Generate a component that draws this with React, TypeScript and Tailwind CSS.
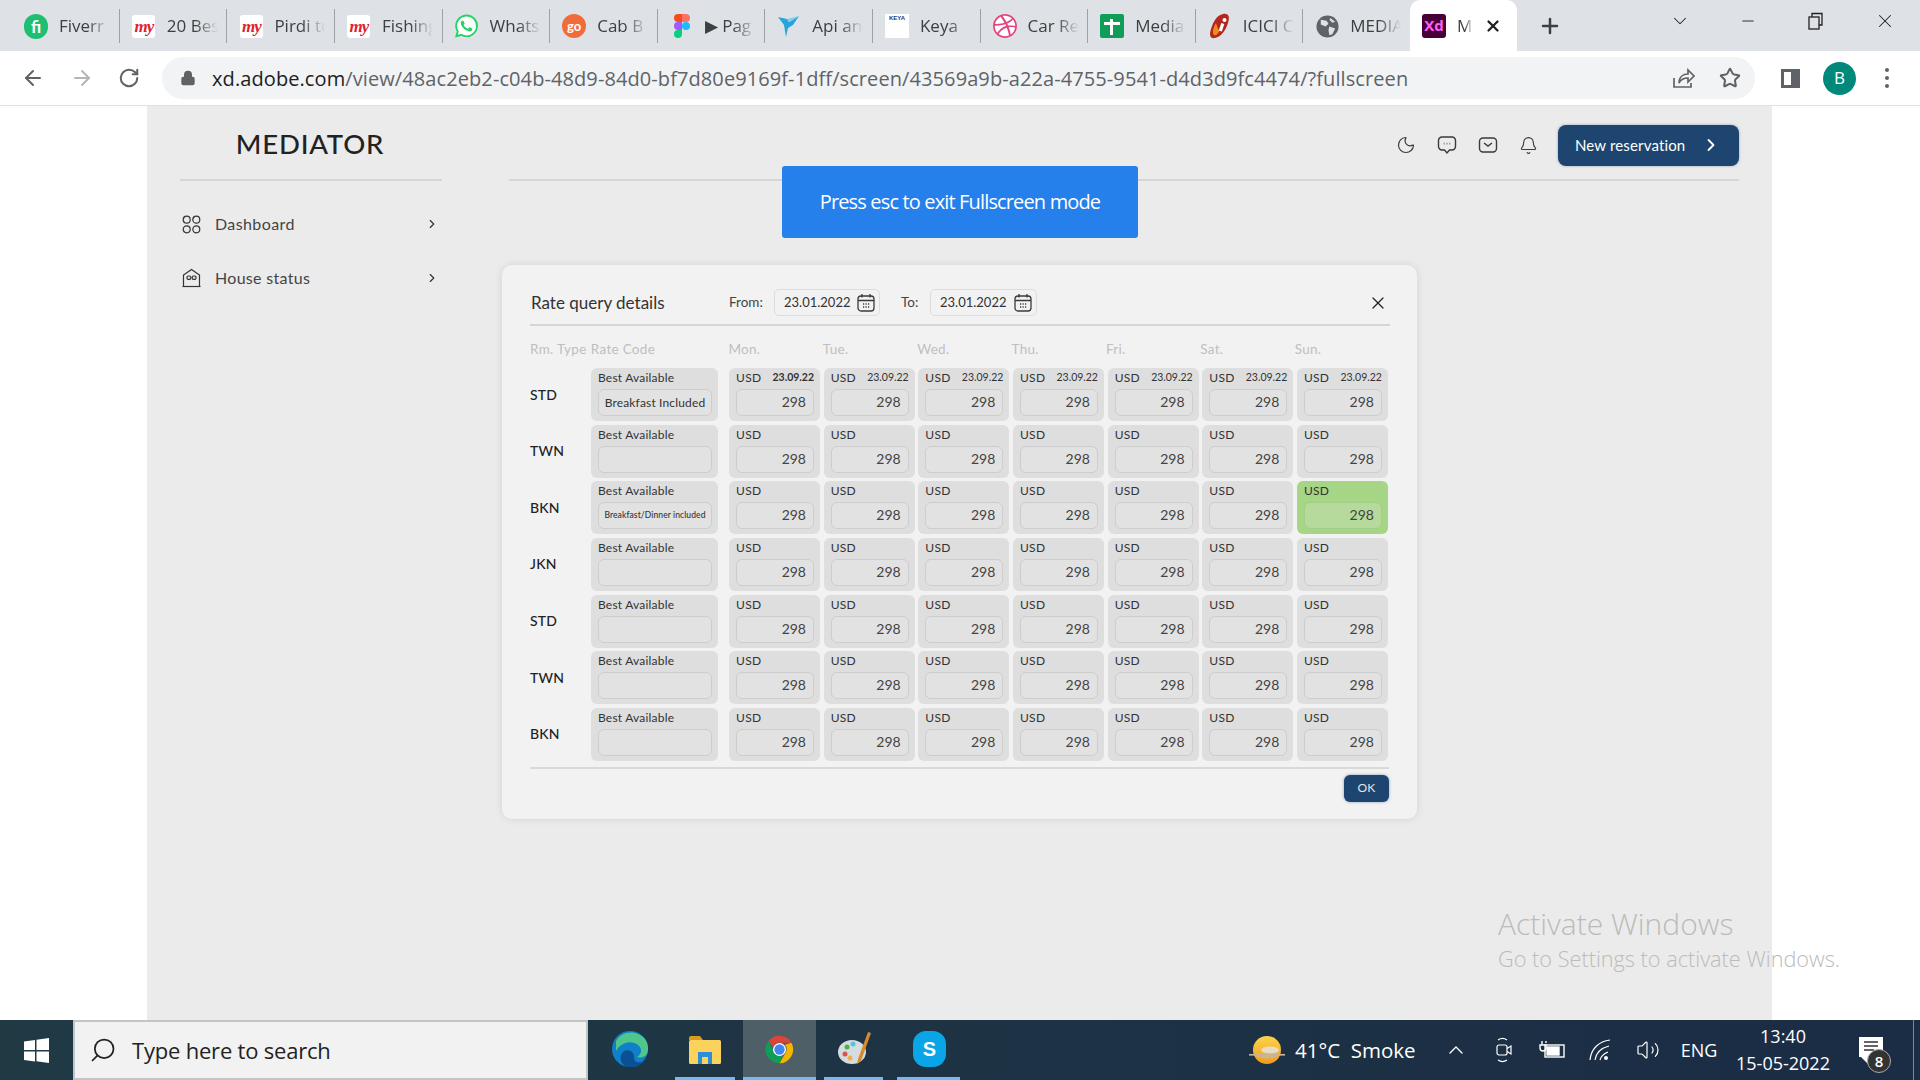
import React from "react";
import { ArrowLeft, ArrowRight, RotateCw, Lock, Star, X, Plus, ChevronDown, Minus, ChevronRight, ChevronUp, Moon, Bell, Search, Volume2 } from "lucide-react";
import { SiWhatsapp, SiDribbble } from "react-icons/si";

const My = () => (
  <div className="w-[23px] h-[23px] bg-white rounded-[3px] flex items-center justify-center text-[#e0222d] italic font-bold text-[17px] leading-none tracking-[-1px] font-['Liberation_Serif',serif]">my</div>
);
const Figma = () => (
  <svg width="16" height="24" viewBox="0 0 16 24">
    <path d="M0 4a4 4 0 0 1 4-4h4v8H4a4 4 0 0 1-4-4z" fill="#f24e1e" />
    <path d="M8 0h4a4 4 0 0 1 0 8H8z" fill="#ff7262" />
    <path d="M0 12a4 4 0 0 1 4-4h4v8H4a4 4 0 0 1-4-4z" fill="#a259ff" />
    <circle cx="12" cy="12" r="4" fill="#1abcfe" />
    <path d="M0 20a4 4 0 0 1 4-4h4v4a4 4 0 0 1-8 0z" fill="#0acf83" />
  </svg>
);
const Bird = () => (
  <svg width="24" height="24" viewBox="0 0 24 24">
    <path d="M1 3l9 2 2 3 10-6-6 9-5 3-2 9-2-12z" fill="#27a4dc" />
    <path d="M10 5l2 3 10-6z" fill="#7fd0ee" />
  </svg>
);
const Icici = () => (
  <svg width="22" height="26" viewBox="0 0 22 26">
    <path d="M14 1c6-1 7 3 5 9-2 7-7 14-13 15-5 1-6-3-4-9 2-7 6-14 12-15z" fill="#b3271e" />
    <path d="M7 10c-3 5-4 10-2 12 2 1 4-1 6-5l-2-1z" fill="#f08a1d" />
    <rect x="11" y="10" width="3.2" height="8" fill="#fff" transform="rotate(18 12 14)" />
    <circle cx="15.5" cy="7" r="2" fill="#fff" />
  </svg>
);
const Globe = () => (
  <svg width="23" height="23" viewBox="0 0 24 24">
    <circle cx="12" cy="12" r="11.5" fill="#5f6368" />
    <path d="M5 5l6 1 2 3-3 3-5-2zM14 12l6 2-3 6-3 1-1-5zM15 3l5 4-3 1-3-3z" fill="#dee1e6" />
  </svg>
);

const tabs: { icon: React.ReactNode; label: string }[] = [
  { icon: <div className="w-[25px] h-[25px] rounded-full bg-[#1dbf73] flex items-center justify-center text-white text-[17px] font-bold leading-none font-['Lato',sans-serif]">fi</div>, label: "Fiverr" },
  { icon: <My />, label: "20 Best" },
  { icon: <My />, label: "Pirdi to" },
  { icon: <My />, label: "Fishing" },
  { icon: <div className="w-[23px] h-[23px] rounded-full bg-white flex items-center justify-center"><SiWhatsapp className="text-[#25d366] w-[24px] h-[24px]" /></div>, label: "Whats" },
  { icon: <div className="w-[24px] h-[24px] rounded-full bg-[#f26b3a] flex items-center justify-center text-white text-[13px] font-bold leading-none font-['Lato',sans-serif]">go</div>, label: "Cab B" },
  { icon: <Figma />, label: "▶ Pag" },
  { icon: <Bird />, label: "Api an" },
  { icon: <div className="w-[24px] h-[24px] bg-white flex items-start justify-center text-[6px] leading-[8px] font-bold text-[#243a73] font-['Liberation_Sans',sans-serif]">KEYA</div>, label: "Keya" },
  { icon: <div className="w-[24px] h-[24px] rounded-full bg-white flex items-center justify-center"><SiDribbble className="text-[#e4447f] w-[24px] h-[24px]" /></div>, label: "Car Re" },
  { icon: <div className="relative w-[24px] h-[24px] bg-[#0f9d58] rounded-[2px]"><span className="absolute left-[10px] top-[5px] w-[3px] h-[16px] bg-white" /><span className="absolute left-[4px] top-[8px] w-[16px] h-[3px] bg-white" /></div>, label: "Media" },
  { icon: <Icici />, label: "ICICI C" },
  { icon: <Globe />, label: "MEDIA" },
];

function Tab({ icon, label, first }: { icon: React.ReactNode; label: string; first: boolean }) {
  return (
    <div className={`h-[34px] mt-[9px] border-r border-[#9ea1a6] flex items-center pl-[12px] shrink-0 ${first ? "w-[107.8px]" : "w-[107.6px]"}`}>
      <div className="w-[24px] flex justify-center shrink-0">{icon}</div>
      <span className="ml-[11px] w-[51px] overflow-hidden whitespace-nowrap text-[17px] text-[#3c4043] [mask-image:linear-gradient(to_right,black_55%,transparent)]">{label}</span>
    </div>
  );
}

function TabBar() {
  return (
    <div className="h-[51px] bg-[#dee1e6] flex items-start pl-[12px] shrink-0">
      {tabs.map((t, i) => (
        <Tab key={t.label} icon={t.icon} label={t.label} first={i === 0} />
      ))}
      <div className="w-[107px] h-[51px] bg-white rounded-t-[10px] flex items-center pl-[12px] shrink-0 -ml-px">
        <div className="w-[24px] h-[24px] rounded-[3px] bg-[#470137] flex items-center justify-center text-[#ff61f6] text-[15px] font-bold leading-none font-['Open_Sans',sans-serif]">Xd</div>
        <span className="ml-[11px] w-[16px] overflow-hidden text-[17px] text-[#3c4043] [mask-image:linear-gradient(to_right,black_50%,transparent)]">M</span>
        <X className="ml-[11px] w-[18px] h-[18px] text-[#202124]" strokeWidth={3} />
      </div>
      <div className="w-[46px] h-[51px] flex items-center justify-center ml-[10px]">
        <Plus className="w-[24px] h-[24px] text-[#3c4043]" strokeWidth={2.5} />
      </div>
      <div className="ml-auto flex h-[42px] items-center text-[#202124]">
        <ChevronDown className="w-[22px] h-[22px] mr-[48px]" strokeWidth={1.1} />
        <Minus className="w-[18px] h-[18px] mr-[50px]" strokeWidth={1.2} />
        <svg width="18" height="18" viewBox="0 0 18 18" fill="none" stroke="#202124" strokeWidth="1.3" className="mr-[49px]">
          <rect x="2" y="5" width="10" height="12" />
          <path d="M5 5V1.5h10V13h-3" />
        </svg>
        <X className="w-[22px] h-[22px] mr-[24px]" strokeWidth={1.1} />
      </div>
    </div>
  );
}

function Toolbar() {
  return (
    <div className="h-[55px] bg-white flex items-center shrink-0 border-b border-[#dfe1e4]">
      <ArrowLeft className="ml-[21px] w-[24px] h-[24px] text-[#5f6368]" strokeWidth={2} />
      <ArrowRight className="ml-[25px] w-[24px] h-[24px] text-[#b4b6b9]" strokeWidth={2} />
      <RotateCw className="ml-[24px] w-[22px] h-[22px] text-[#5f6368]" strokeWidth={2.2} />
      <div className="ml-[22px] w-[1593px] h-[42px] rounded-full bg-[#f1f3f4] flex items-center">
        <Lock className="ml-[18px] w-[16px] h-[16px] text-[#5f6368] fill-[#5f6368]" />
        <span className="ml-[16px] pt-[1px] text-[20px] tracking-[0.09px] whitespace-nowrap text-[#5f6368]">
          <span className="text-[#202124]">xd.adobe.com</span>/view/48ac2eb2-c04b-48d9-84d0-bf7d80e9169f-1dff/screen/43569a9b-a22a-4755-9541-d4d3d9fc4474/?fullscreen
        </span>
        <div className="ml-auto flex items-center text-[#5f6368]">
          <svg width="24" height="24" viewBox="0 0 24 24" fill="none" stroke="#5f6368" strokeWidth="1.7">
            <path d="M3 12v9h17v-4" />
            <path d="M8 17c0-6 4-9 9-9V4l6 6-6 6v-4c-4 0-7 1-9 5z" />
          </svg>
          <Star className="ml-[24px] mr-[14px] w-[22px] h-[22px]" strokeWidth={2.2} />
        </div>
      </div>
      <div className="ml-[26px] w-[19px] h-[19px] border-[3px] border-[#5f6368] flex justify-end">
        <div className="w-[6px] bg-[#5f6368]" />
      </div>
      <div className="ml-[23px] w-[33px] h-[33px] rounded-full bg-[#00897b] flex items-center justify-center text-white text-[17px]">B</div>
      <div className="ml-[29px] flex flex-col gap-[4px]">
        <span className="w-[4px] h-[4px] rounded-full bg-[#5f6368]" />
        <span className="w-[4px] h-[4px] rounded-full bg-[#5f6368]" />
        <span className="w-[4px] h-[4px] rounded-full bg-[#5f6368]" />
      </div>
    </div>
  );
}

const GridIcon = () => (
  <svg width="19" height="19" viewBox="0 0 19 19" fill="none" stroke="#333" strokeWidth="1.2">
    <circle cx="4.7" cy="4.7" r="3.5" />
    <circle cx="14.3" cy="4.7" r="3.5" />
    <circle cx="4.7" cy="14.3" r="3.5" />
    <circle cx="14.3" cy="14.3" r="3.5" />
  </svg>
);
const HouseIcon = () => (
  <svg width="19" height="20" viewBox="0 0 19 20" fill="none" stroke="#333" strokeWidth="1.2">
    <path d="M1.5 18.5V7L9.5 1.5l8 5.5v11.5" />
    <path d="M0.5 18.5h18" />
    <rect x="5" y="8" width="3.8" height="3.4" rx="1.3" />
    <rect x="10.2" y="8" width="3.8" height="3.4" rx="1.3" />
  </svg>
);

function Sidebar() {
  return (
    <aside className="w-[328px] shrink-0 bg-[#ebebeb] px-[33px] shadow-[3px_0_6px_rgba(0,0,0,0.015)] relative">
      <div className="h-[75px] border-b-2 border-[#d6d6d6] flex items-center justify-center text-[27.5px] tracking-[0.8px] font-medium text-[#222] pt-[2px] pr-[2px]">MEDIATOR</div>
      <div className="mt-[21px] h-[44px] flex items-center pl-[2px] text-[#444] text-[16px]">
        <GridIcon />
        <span className="ml-[14px] tracking-[0.4px]">Dashboard</span>
        <ChevronRight className="ml-auto mr-[3px] w-[14px] h-[14px] text-[#333]" />
      </div>
      <div className="mt-[10px] h-[44px] flex items-center pl-[2px] text-[#444] text-[16px]">
        <HouseIcon />
        <span className="ml-[14px] tracking-[0.3px]">House status</span>
        <ChevronRight className="ml-auto mr-[3px] w-[14px] h-[14px] text-[#333]" />
      </div>
    </aside>
  );
}

function Calendar() {
  return (
    <svg width="18" height="19" viewBox="0 0 18 19" fill="none" stroke="#3a3a3a" strokeWidth="1.3">
      <rect x="1" y="3" width="16" height="15" rx="3" />
      <path d="M1 7.5h16M5 1v3.5M13 1v3.5" />
      <path d="M6 11h1.2M8.5 11h1.2M11 11h1.2M6 14h1.2M8.5 14h1.2M11 14h1.2" />
    </svg>
  );
}

function DateField({ className }: { className: string }) {
  return (
    <div className={`h-[27px] border border-[#dcdcdc] rounded-[5px] flex items-center justify-between pl-[9px] pr-[4px] text-[13px] text-[#333] ${className}`}>
      <span>23.01.2022</span>
      <Calendar />
    </div>
  );
}

const rows = [
  { type: "STD", note: "Breakfast Included", noteClass: "text-[12px] tracking-[0.15px] text-[#333]", date: true },
  { type: "TWN", note: "", noteClass: "", date: false },
  { type: "BKN", note: "Breakfast/Dinner included", noteClass: "text-[8.5px] tracking-[0.1px] text-[#333] font-medium", date: false },
  { type: "JKN", note: "", noteClass: "", date: false },
  { type: "STD", note: "", noteClass: "", date: false },
  { type: "TWN", note: "", noteClass: "", date: false },
  { type: "BKN", note: "", noteClass: "", date: false },
];
const days = ["Mon.", "Tue.", "Wed.", "Thu.", "Fri.", "Sat.", "Sun."];

function DayCell({ date, green, bold }: { date: boolean; green: boolean; bold: boolean }) {
  return (
    <div className={`w-[91px] h-[53px] rounded-[6px] px-[7px] shrink-0 ${green ? "bg-[#a5d585]" : "bg-[#dedede]"}`}>
      <div className="h-[20px] mb-[1px] flex items-center justify-between text-[12px] text-[#333] tracking-[0.3px]">
        <span>USD</span>
        {date && <span className={`text-[10.5px] -mr-[1px] tracking-[0] ${bold ? "font-bold" : ""}`}>23.09.22</span>}
      </div>
      <div className={`h-[27px] -mr-[1px] rounded-[6px] border flex items-center justify-end pr-[7px] pb-[2px] text-[14px] text-[#444] ${green ? "border-[#a0cf85] bg-[#b6da9c]" : "border-[#cdcdcd] bg-[#e2e2e2]"}`}>298</div>
    </div>
  );
}

function Modal() {
  return (
    <div className="w-[915px] h-[554px] ml-[27px] bg-[#f2f2f2] rounded-[10px] shadow-[0_0_8px_rgba(0,0,0,0.1)] pl-[28px] pr-[28px] pt-[24px]">
      <div className="h-[37px] w-[860px] border-b-2 border-[#d6d6d6] flex items-start">
        <div className="w-[199px] h-[27px] flex items-center pl-[1px] text-[17px] text-[#333]">Rate query details</div>
        <div className="w-[45px] h-[27px] flex items-center text-[13.5px] text-[#444]">From:</div>
        <DateField className="w-[106px]" />
        <div className="w-[29px] ml-[21px] h-[27px] flex items-center text-[13.5px] text-[#444]">To:</div>
        <DateField className="w-[107px]" />
        <X className="ml-auto mr-[2px] mt-[4px] w-[20px] h-[20px] text-[#222]" strokeWidth={1.5} />
      </div>
      <div className="h-[42px] pt-[5px] flex items-center text-[13.5px] text-[#bfbfbf] tracking-[0.3px]">
        <span className="w-[61px] whitespace-nowrap">Rm. Type</span>
        <span className="w-[138px]">Rate Code</span>
        {days.map((d) => (
          <span key={d} className="w-[94.67px]">{d}</span>
        ))}
      </div>
      <div className="flex flex-col gap-[3.67px]">
        {rows.map((r, i) => (
          <div key={i} className="flex items-center">
            <div className="w-[61px] text-[14px] font-medium text-[#222] tracking-[0.2px] shrink-0 pb-[1px]">{r.type}</div>
            <div className="w-[127px] h-[53px] rounded-[6px] bg-[#dedede] px-[7px] shrink-0">
              <div className="h-[20px] mb-[1px] flex items-center text-[12px] text-[#333] tracking-[0.2px]">Best Available</div>
              <div className={`h-[27px] -mr-[1px] rounded-[6px] border border-[#cdcdcd] bg-[#e2e2e2] flex items-center justify-center whitespace-nowrap ${r.noteClass}`}>{r.note}</div>
            </div>
            <div className="ml-[11px] flex gap-[3.67px]">
              {days.map((d, j) => (
                <DayCell key={d} date={r.date} bold={j === 0} green={i === 2 && j === 6} />
              ))}
            </div>
          </div>
        ))}
      </div>
      <div className="mt-[6px] h-[2px] w-[859px] bg-[#d9d9d9]" />
      <div className="mt-[6px] w-[859px] flex justify-end">
        <div className="w-[45px] h-[27px] rounded-[6px] bg-[#1d4570] text-[#e6e6e6] text-[12px] flex items-center justify-center shadow-[0_0_3px_rgba(29,69,112,0.5)] tracking-[0.3px]">OK</div>
      </div>
    </div>
  );
}

function Main() {
  return (
    <main className="flex-1 relative bg-[#ebebeb] px-[34px]">
      <div className="h-[75px] border-b-2 border-[#d6d6d6] flex items-center justify-end -mr-[1px] pt-[5px] text-[#3a3a3a]">
        <Moon className="w-[20px] h-[20px] mr-[21px]" strokeWidth={1.4} />
        <svg width="20" height="20" viewBox="0 0 20 20" fill="none" stroke="#3a3a3a" strokeWidth="1.4" className="mr-[21px]">
          <path d="M5 2h10a3.5 3.5 0 0 1 3.5 3.5v6A3.5 3.5 0 0 1 15 15h-2.5L10 18l-2.5-3H5a3.5 3.5 0 0 1-3.5-3.5v-6A3.5 3.5 0 0 1 5 2z" />
          <path d="M6.8 8.6h.6M9.7 8.6h.6M12.6 8.6h.6" strokeWidth="1.6" />
        </svg>
        <svg width="20" height="18" viewBox="0 0 20 18" fill="none" stroke="#3a3a3a" strokeWidth="1.4" className="mr-[21px]">
          <rect x="1.5" y="2" width="17" height="14" rx="3.5" />
          <path d="M6 7l4 3 4-3" />
        </svg>
        <Bell className="w-[19px] h-[19px] mr-[21px]" strokeWidth={1.4} />
        <div className="w-[181px] h-[41px] -ml-[1px] rounded-[8px] bg-[#1d4570] text-white text-[15px] flex items-center pl-[17px] tracking-[0.15px] shadow-[0_0_3px_rgba(29,69,112,0.4)]">
          New reservation
          <ChevronRight className="ml-auto mr-[18px] w-[20px] h-[20px]" strokeWidth={2.2} />
        </div>
      </div>
      <div className="h-[84px]" />
      <div className="-ml-[34px]"><Modal /></div>
      <div className="absolute left-[307px] top-[60px] w-[356px] h-[72px] rounded-[3px] bg-[#2680eb] text-white flex items-center justify-center text-[20px] font-medium font-['Open_Sans',sans-serif] tracking-[-0.85px]">
        Press esc to exit Fullscreen mode
      </div>
    </main>
  );
}

const WinLogo = () => (
  <svg width="25" height="25" viewBox="0 0 25 25" fill="#fff">
    <path d="M0 3.5L11 2v10H0zM12.5 1.8L25 0v12H12.5zM0 13.5h11v10L0 22zM12.5 13.5H25V25l-12.5-1.8z" />
  </svg>
);
const Edge = () => (
  <svg width="36" height="36" viewBox="0 0 36 36">
    <circle cx="18" cy="18" r="18" fill="#1080c8" />
    <path d="M4 10C9 0 25-2 33 8c3 4 4 10 2 15-2 3-6 4-10 3 5-3 5-8 2-11C21 9 10 10 4 20z" fill="#4fc78c" />
    <path d="M15 36c-7-3-8-11-4-15 3-3 8-2 10 1 2 4 0 8 4 9 4 1 7-1 9-3-4 6-11 10-19 8z" fill="#0b4f95" />
  </svg>
);
const Explorer = () => (
  <svg width="32" height="29" viewBox="0 0 32 29">
    <path d="M0 3a2 2 0 0 1 2-2h9l3 4H0z" fill="#d89b1c" />
    <rect x="0" y="5" width="32" height="24" rx="1.5" fill="#fbd25c" />
    <rect x="9" y="17" width="14" height="12" fill="#2b8fd8" />
    <rect x="13" y="22" width="6" height="7" fill="#fbd25c" />
  </svg>
);
const Chrome = () => (
  <svg width="33" height="33" viewBox="0 0 48 48">
    <path d="M24 4a20 20 0 0 1 17.3 10H24a10 10 0 0 0-9.3 6.3L7.7 12A20 20 0 0 1 24 4z" fill="#db4437" />
    <path d="M41.3 14A20 20 0 0 1 24 44l8.7-15A10 10 0 0 0 32 17.2z" fill="#f4b400" />
    <path d="M24 44A20 20 0 0 1 7.7 12l8.6 15a10 10 0 0 0 13 5z" fill="#0f9d58" />
    <circle cx="24" cy="24" r="9.5" fill="#fff" />
    <circle cx="24" cy="24" r="7.5" fill="#4285f4" />
  </svg>
);
const Paint = () => (
  <svg width="36" height="36" viewBox="0 0 36 36">
    <ellipse cx="15" cy="21" rx="14" ry="12" fill="#d5dce0" />
    <circle cx="8" cy="23" r="2.5" fill="#d9534f" />
    <circle cx="10" cy="16" r="2.5" fill="#4cae4c" />
    <circle cx="16" cy="13" r="2.5" fill="#5bc0de" />
    <circle cx="13" cy="27" r="2.5" fill="#f0ad4e" />
    <path d="M31 1l3 1-10 28-4 3 1-5z" fill="#d88a2e" />
  </svg>
);
const Skype = () => (
  <div className="w-[33px] h-[36px] rounded-[13px] bg-[#0aa5e6] flex items-center justify-center text-white font-bold text-[20px] leading-none font-['Liberation_Sans',sans-serif]">S</div>
);
const Weather = () => (
  <svg width="36" height="28" viewBox="0 0 36 28">
    <defs>
      <linearGradient id="sun" x1="0" y1="0" x2="0" y2="1">
        <stop offset="0" stopColor="#fbd44a" />
        <stop offset="1" stopColor="#f39a1d" />
      </linearGradient>
    </defs>
    <ellipse cx="18" cy="14" rx="14" ry="14" fill="url(#sun)" />
    <ellipse cx="21" cy="14" rx="9" ry="3.5" fill="#e9dcc4" />
    <rect x="0" y="18" width="36" height="1.6" fill="#c9b89a" />
    <ellipse cx="18" cy="20" rx="10" ry="2.6" fill="#cbb58f" />
  </svg>
);
const Meet = () => (
  <svg width="18" height="26" viewBox="0 0 18 26" fill="none" stroke="#fff" strokeWidth="1.2">
    <path d="M3 3a8 8 0 0 1 9 0M3 23a8 8 0 0 0 9 0" />
    <rect x="2" y="8" width="10" height="10" rx="2" />
    <path d="M12 11.5l4-2.5v8l-4-2.5" />
  </svg>
);

function TaskApp({ children, active, bar, barClass }: { children: React.ReactNode; active?: boolean; bar?: boolean; barClass?: string }) {
  return (
    <div className={`relative w-[73px] h-[60px] mx-[1px] shrink-0 flex items-center justify-center pb-[2px] ${active ? "bg-[#4e5f68]" : ""}`}>
      {children}
      {bar && <span className={`absolute bottom-0 h-[3px] bg-[#76b9ed] ${barClass}`} />}
    </div>
  );
}

function Taskbar() {
  return (
    <div className="h-[60px] shrink-0 bg-gradient-to-r from-[#203a44] to-[#1b2c45] flex items-center text-white font-['Open_Sans',sans-serif]">
      <div className="w-[73px] flex justify-center"><WinLogo /></div>
      <div className="w-[515px] h-[60px] bg-[#f2f2f2] border-2 border-[#c4c4c4] flex items-center text-[#222] text-[22px] shrink-0">
        <Search className="ml-[14px] w-[28px] h-[28px] -scale-x-100 text-[#222]" strokeWidth={1.5} />
        <span className="ml-[15px] -tracking-[0.2px]">Type here to search</span>
      </div>
      <div className="ml-[4px] flex">
        <TaskApp><Edge /></TaskApp>
        <TaskApp bar barClass="left-[7px] right-[6px]"><Explorer /></TaskApp>
        <TaskApp active bar barClass="left-0 right-0"><Chrome /></TaskApp>
        <TaskApp bar barClass="left-[6px] right-[8px]"><Paint /></TaskApp>
        <TaskApp bar barClass="left-[4px] right-[6px]"><Skype /></TaskApp>
      </div>
      <div className="ml-auto flex items-center h-full">
        <Weather />
        <span className="ml-[10px] w-[137px] text-[20.5px] whitespace-pre">41°C  Smoke</span>
        <div className="w-[48px] flex justify-center"><ChevronUp className="w-[24px] h-[24px]" strokeWidth={1.4} /></div>
        <div className="w-[48px] flex justify-center"><Meet /></div>
        <div className="w-[48px] flex justify-center">
          <svg width="26" height="18" viewBox="0 0 26 18" fill="none" stroke="#fff" strokeWidth="1.4">
            <rect x="6" y="4" width="19" height="12" />
            <rect x="8" y="6" width="12" height="8" fill="#fff" />
            <path d="M3 0v4M7 0v2M1 4h6v3a3 3 0 0 1-6 0z" />
          </svg>
        </div>
        <div className="w-[48px] flex justify-center">
          <svg width="22" height="22" viewBox="0 0 22 22" fill="none" stroke="#fff" strokeWidth="1.2">
            <path d="M1 21C2 10 10 2 21 1M6 21c1-7 6-12 14-14M11 21c1-4 3-6 8-8" />
            <circle cx="17" cy="19" r="2" fill="#fff" stroke="none" />
          </svg>
        </div>
        <div className="w-[48px] flex justify-center"><Volume2 className="w-[24px] h-[24px]" strokeWidth={1.2} /></div>
        <div className="w-[54px] text-center text-[18px]">ENG</div>
        <div className="w-[114px] flex flex-col items-center text-[18px] leading-[27px]">
          <span>13:40</span>
          <span>15-05-2022</span>
        </div>
        <div className="relative w-[50px] h-[60px] ml-[5px] mr-[18px]">
          <svg width="24" height="29" viewBox="0 0 24 29" className="absolute left-[14px] top-[17px]">
            <path d="M0 0h24v20H11l-1 0v8l-8-8H0z" fill="#fff" />
            <path d="M5 5h14M5 9h14M5 13h10" stroke="#333" strokeWidth="1.5" />
          </svg>
          <div className="absolute left-[22px] top-[29px] w-[24px] h-[24px] rounded-full bg-[#333] border border-[#aaa] flex items-center justify-center text-[15px] font-semibold leading-none">8</div>
        </div>
        <div className="w-px h-full bg-[#7d8a96] mr-[6px]" />
      </div>
    </div>
  );
}

export default function App() {
  return (
    <div className="relative w-[1920px] h-[1080px] overflow-hidden flex flex-col bg-white font-['Open_Sans',sans-serif]">
      <TabBar />
      <Toolbar />
      <div className="flex-1 min-h-0 flex font-['Lato',sans-serif]">
        <div className="w-[147px] bg-white shrink-0" />
        <Sidebar />
        <Main />
        <div className="w-[148px] bg-white shrink-0" />
      </div>
      <Taskbar />
      <div className="absolute left-[1498px] top-[904px] text-[#bbbbbb] font-light font-['Open_Sans',sans-serif] pointer-events-none">
        <div className="text-[30px] leading-[40px]">Activate Windows</div>
        <div className="text-[21.7px] leading-[30px]">Go to Settings to activate Windows.</div>
      </div>
    </div>
  );
}
